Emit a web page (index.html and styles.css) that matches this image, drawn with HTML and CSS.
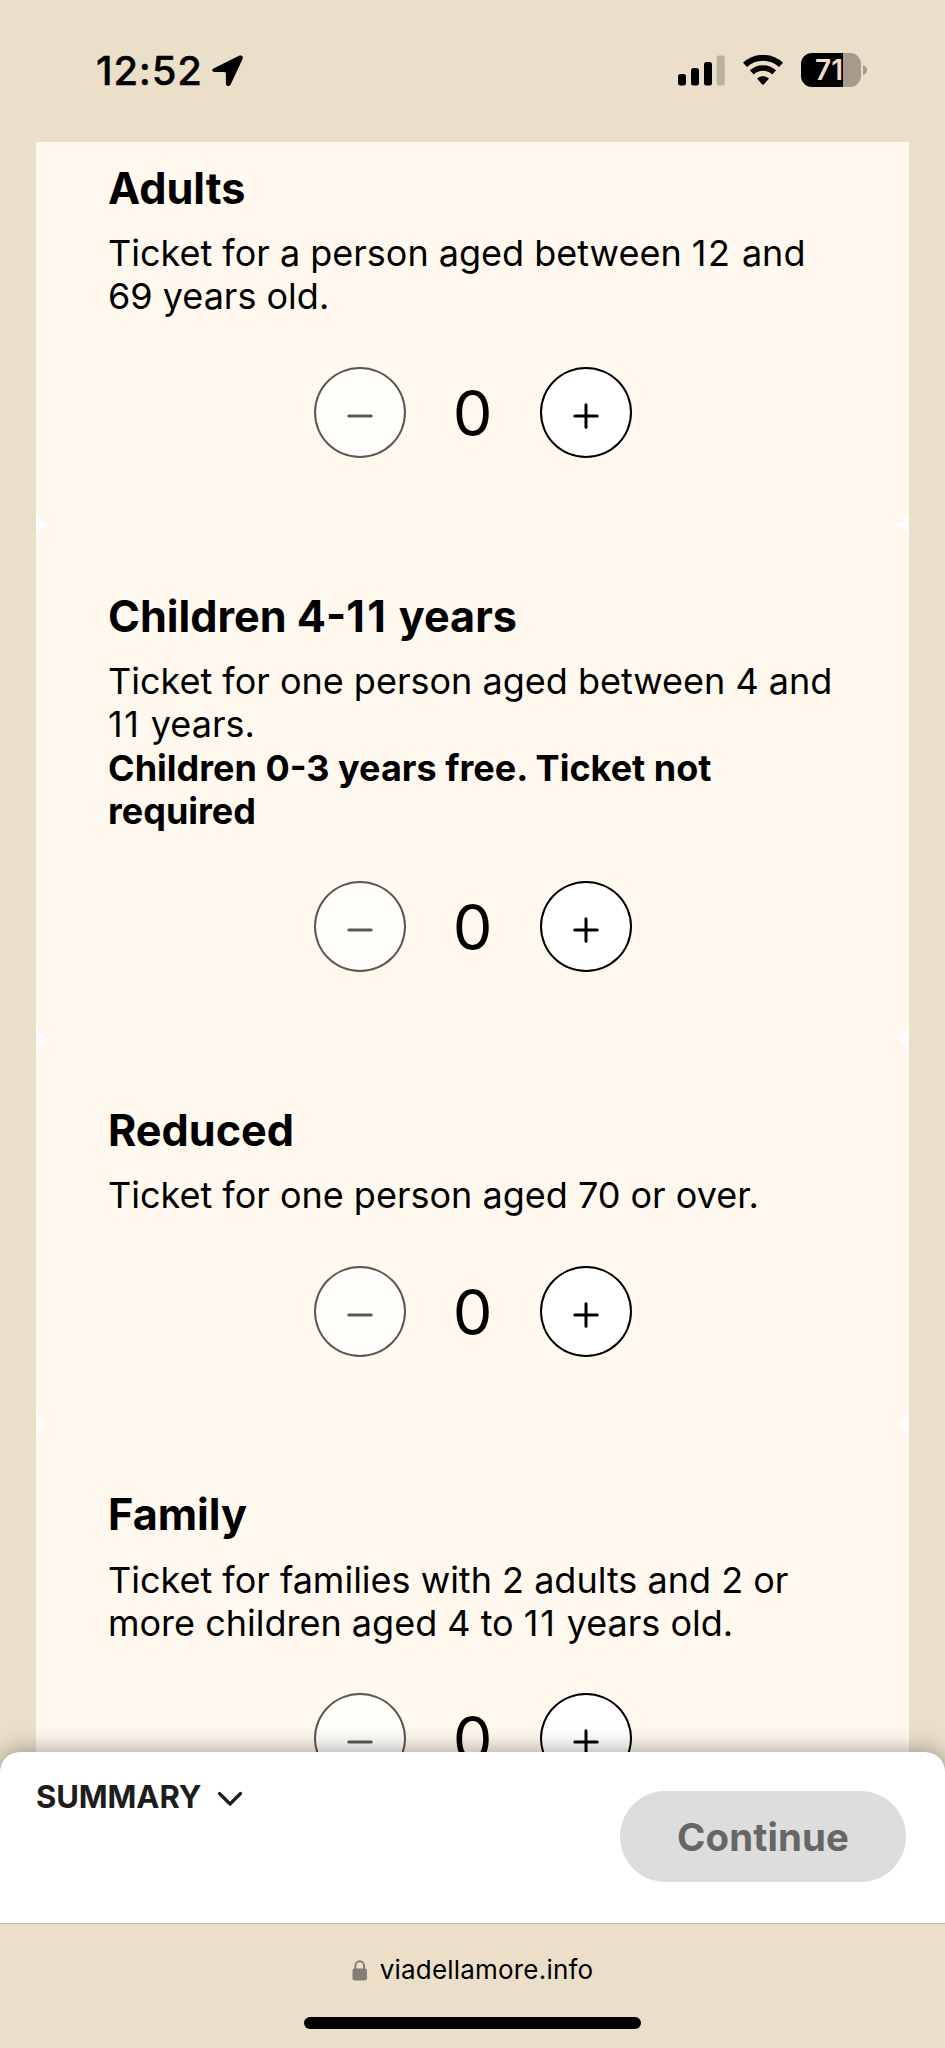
FILE: index.html
```html
<!DOCTYPE html>
<html lang="en">
<head>
    <meta charset="UTF-8">
    <meta name="viewport" content="width=device-width, initial-scale=1.0">
    <title>Tickets - Via dell'Amore</title>
    <link rel="stylesheet" href="styles.css">
</head>
<body>
    <header class="status-bar">
        <div class="status-left">
            <span class="time">12:52</span>
            <svg class="location" width="31" height="32" viewBox="0 0 31 32">
                <path d="M2 13.2 L27.5 .6 Q31.6 -.4 30.6 4 L18.6 29.6 Q17 32 14.8 30.6 Q13.9 29.8 13.9 28.5 V18.6 Q13.9 17.1 12.4 17.1 H2.8 Q0 16.8 .2 14.8 Q.5 13.8 2 13.2 Z"/>
            </svg>
        </div>
        <div class="status-right">
            <svg class="signal" width="47" height="31" viewBox="0 0 47 31">
                <rect x="0" y="19" width="8" height="11.5" rx="2.5"/>
                <rect x="13" y="13" width="8" height="17.5" rx="2.5"/>
                <rect x="26" y="7" width="8" height="23.5" rx="2.5"/>
                <rect x="38.7" y="0.5" width="8" height="30" rx="2.5" fill="#bab09f"/>
            </svg>
            <svg class="wifi" width="40" height="30" viewBox="0 0 40 30">
                <path d="M2 9.8 A26.5 26.5 0 0 1 38 9.8" fill="none" stroke="#000" stroke-width="5.8"/>
                <path d="M8.8 17.4 A16.5 16.5 0 0 1 31.2 17.4" fill="none" stroke="#000" stroke-width="5.6"/>
                <path d="M14 23.6 Q20 18.2 26 23.6 L21 29.2 Q20 30.2 19 29.2 Z"/>
            </svg>
            <div class="battery">
                <span class="battery-level">71</span>
            </div>
            <svg class="battery-tip" width="4" height="10" viewBox="0 0 4 10">
                <path d="M0 0 Q4 1.5 4 5 T0 10 Z"/>
            </svg>
        </div>
    </header>

    <main>
        <div class="ticket-list">
            <section class="ticket">
                <h2>Adults</h2>
                <p>Ticket for a person aged between <span class="num">12</span> and 69 years old.</p>
                <div class="counter">
                    <button class="round-btn" disabled><svg width="26" height="26" viewBox="0 0 26 26"><path d="M1.8 13 H24.2"/></svg></button>
                    <span class="count">0</span>
                    <button class="round-btn"><svg width="26" height="26" viewBox="0 0 26 26"><path d="M1.8 13 H24.2 M13 1.8 V24.2"/></svg></button>
                </div>
            </section>
            <section class="ticket">
                <h2>Children 4-<span class="num">11</span> years</h2>
                <p>Ticket for one person aged between 4 and <span class="num">11</span> years.<br><strong>Children 0-3 years free. Ticket not required</strong></p>
                <div class="counter">
                    <button class="round-btn" disabled><svg width="26" height="26" viewBox="0 0 26 26"><path d="M1.8 13 H24.2"/></svg></button>
                    <span class="count">0</span>
                    <button class="round-btn"><svg width="26" height="26" viewBox="0 0 26 26"><path d="M1.8 13 H24.2 M13 1.8 V24.2"/></svg></button>
                </div>
            </section>
            <section class="ticket">
                <h2>Reduced</h2>
                <p>Ticket for one person aged 70 or over.</p>
                <div class="counter">
                    <button class="round-btn" disabled><svg width="26" height="26" viewBox="0 0 26 26"><path d="M1.8 13 H24.2"/></svg></button>
                    <span class="count">0</span>
                    <button class="round-btn"><svg width="26" height="26" viewBox="0 0 26 26"><path d="M1.8 13 H24.2 M13 1.8 V24.2"/></svg></button>
                </div>
            </section>
            <section class="ticket">
                <h2>Family</h2>
                <p>Ticket for families with 2 adults and 2 or more children aged 4 to <span class="num">11</span> years old.</p>
                <div class="counter">
                    <button class="round-btn" disabled><svg width="26" height="26" viewBox="0 0 26 26"><path d="M1.8 13 H24.2"/></svg></button>
                    <span class="count">0</span>
                    <button class="round-btn"><svg width="26" height="26" viewBox="0 0 26 26"><path d="M1.8 13 H24.2 M13 1.8 V24.2"/></svg></button>
                </div>
            </section>
        </div>
    </main>

    <section class="summary-bar">
        <div class="summary-toggle">
            <span>SUMMARY</span>
            <svg width="26" height="16" viewBox="0 0 26 16">
                <path d="M2.5 2.5 L13 13 L23.5 2.5"/>
            </svg>
        </div>
        <button class="continue-btn" disabled>Continue</button>
    </section>

    <footer class="browser-bar">
        <div class="address">
            <svg width="16" height="21" viewBox="0 0 16 21">
                <rect x="0.5" y="8.5" width="14.5" height="12" rx="2"/>
                <path d="M3.4 9.5 V5.8 A4.35 4.6 0 0 1 12.1 5.8 V9.5" fill="none" stroke="#857e75" stroke-width="1.9"/>
            </svg>
            <span>viadellamore.info</span>
        </div>
        <div class="home-indicator"></div>
    </footer>
</body>
</html>
```
FILE: styles.css
```css
* {
    box-sizing: border-box;
}

body {
    font-family: 'Inter', sans-serif;
    background: #ebdfc9;
    color: #000;
    margin: 0;
    height: 2048px;
    display: flex;
    flex-direction: column;
    overflow: hidden;
}

button {
    font-family: inherit;
    padding: 0;
}

svg {
    display: block;
    flex: none;
}

/* Status bar */
.status-bar {
    flex: none;
    height: 142px;
    padding: 0 78px 0 96px;
    display: flex;
    justify-content: space-between;
}

.status-left {
    display: flex;
    align-items: flex-start;
    padding-top: 46px;
}

.time {
    width: 116px;
    font-size: 40px;
    font-weight: 500;
    line-height: 50px;
    letter-spacing: 0.8px;
    -webkit-text-stroke: 0.4px #000;
}

.location {
    margin-top: 9px;
}

.status-right {
    display: flex;
    align-items: flex-start;
    padding-top: 53px;
}

.signal {
    margin-top: 2px;
}

.wifi {
    margin: 2px 18px 0 18px;
}

.battery {
    width: 60px;
    height: 34px;
    border-radius: 11px;
    background: linear-gradient(to right, #000 42px, #a59b8c 42px);
}

.battery-level {
    display: block;
    width: 46px;
    padding-left: 14px;
    color: #ebdfc9;
    font-size: 28px;
    font-weight: 600;
    line-height: 34px;
}

.battery-tip {
    margin: 12px 0 0 2px;
    fill: #a59b8c;
}

/* Tickets */
main {
    flex: 1;
    min-height: 0;
    padding: 0 36px;
    overflow: hidden;
}

.ticket-list {
    background: #fff;
}

.ticket {
    background: #fff8ee;
    border-radius: 17px;
    padding: 64.8px 72px 67px;
}

.ticket:first-child {
    border-top-left-radius: 0;
    border-top-right-radius: 0;
    padding-top: 19.8px;
}

.ticket h2 {
    margin: 0 0 18.4px;
    font-size: 43.2px;
    font-weight: 700;
    line-height: 52px;
}

.ticket p {
    margin: 0 0 48px;
    font-size: 36px;
    line-height: 43.3px;
}

.ticket strong {
    font-weight: 700;
}

.num {
    letter-spacing: 1.7px;
}

h2 .num {
    letter-spacing: 2.5px;
}

.counter {
    display: flex;
    justify-content: center;
    align-items: center;
}

.round-btn {
    width: 92px;
    height: 91px;
    border: 2px solid #000;
    border-radius: 50%;
    background: #fff;
    display: flex;
    justify-content: center;
    align-items: center;
    padding-top: 7px;
}

.round-btn svg {
    fill: none;
    stroke: #000;
    stroke-width: 3;
    stroke-linecap: round;
}

.round-btn:disabled {
    border-color: #5a5854;
    background: #fffefb;
}

.round-btn:disabled svg {
    stroke: #5a5854;
}

.count {
    width: 134px;
    font-size: 63px;
    line-height: 93px;
    height: 91px;
    text-align: center;
}

/* Summary */
.summary-bar {
    flex: none;
    position: relative;
    height: 171px;
    padding: 39px 39px 0 36px;
    background: #fff;
    border-radius: 20px 20px 0 0;
    box-shadow: 0 0 24px rgba(0, 0, 0, 0.4);
    display: flex;
    justify-content: space-between;
    align-items: flex-start;
}

.summary-toggle {
    display: flex;
    align-items: center;
    gap: 16px;
    margin-top: -13px;
    color: #1d1d1d;
    font-size: 31px;
    font-weight: 700;
    line-height: 38px;
}

.summary-toggle span {
    letter-spacing: -0.1px;
}

.summary-toggle svg {
    margin-top: 4px;
    fill: none;
    stroke: #1d1d1d;
    stroke-width: 3.2;
    stroke-linecap: round;
    stroke-linejoin: round;
}

.continue-btn {
    width: 286px;
    height: 91px;
    border: none;
    border-radius: 46px;
    background: #ddd;
    color: #666;
    font-size: 38.4px;
    font-weight: 700;
    letter-spacing: 0.1px;
}

/* Browser bar */
.browser-bar {
    flex: none;
    position: relative;
    height: 125px;
    border-top: 1px solid #bdb5a6;
    background: #ebdfc9;
    display: flex;
    flex-direction: column;
    align-items: center;
}

.address {
    display: flex;
    align-items: center;
    gap: 12px;
    margin-top: 29px;
    font-size: 26px;
    line-height: 34px;
    letter-spacing: 0.2px;
}

.address svg {
    fill: #857e75;
}

.home-indicator {
    width: 337px;
    height: 12px;
    margin-top: 30px;
    border-radius: 6px;
    background: #000;
}
```
